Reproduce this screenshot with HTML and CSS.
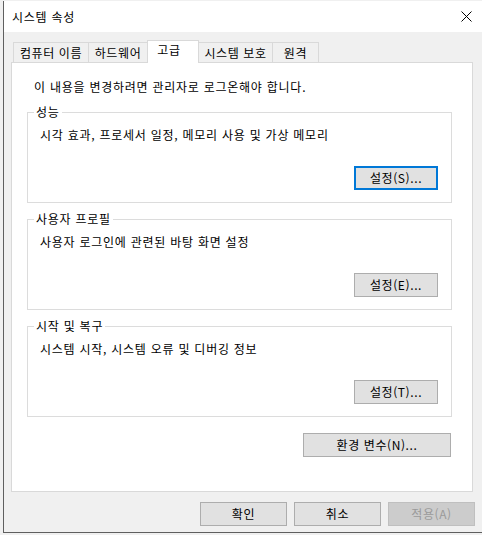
FILE: index.html
```html
<!DOCTYPE html>
<html lang="ko">
<head>
<meta charset="utf-8">
<title>시스템 속성</title>
<link rel="stylesheet" href="styles.css">
</head>
<body>
<div class="window">
  <div class="titlebar">
    <span class="title">시스템 속성</span>
    <span class="close">
      <svg width="11" height="11" viewBox="0 0 11 11"><path d="M0.5 0.5 L10.5 10.5 M10.5 0.5 L0.5 10.5" stroke="#000" stroke-width="1" fill="none"/></svg>
    </span>
  </div>
  <div class="body">
    <div class="tabs">
      <div class="tab t1">컴퓨터 이름</div>
      <div class="tab t2">하드웨어</div>
      <div class="tab t3 active">고급</div>
      <div class="tab t4">시스템 보호</div>
      <div class="tab t5">원격</div>
    </div>
    <div class="panel">
      <p class="info">이 내용을 변경하려면 관리자로 로그온해야 합니다.</p>
      <fieldset class="group first">
        <legend>성능</legend>
        <p class="desc">시각 효과, 프로세서 일정, 메모리 사용 및 가상 메모리</p>
        <div class="row"><button class="btn set focused">설정(S)...</button></div>
      </fieldset>
      <fieldset class="group">
        <legend>사용자 프로필</legend>
        <p class="desc">사용자 로그인에 관련된 바탕 화면 설정</p>
        <div class="row"><button class="btn set">설정(E)...</button></div>
      </fieldset>
      <fieldset class="group">
        <legend>시작 및 복구</legend>
        <p class="desc">시스템 시작, 시스템 오류 및 디버깅 정보</p>
        <div class="row"><button class="btn set">설정(T)...</button></div>
      </fieldset>
      <div class="envrow"><button class="btn env">환경 변수(N)...</button></div>
    </div>
    <div class="footer">
      <button class="btn foot">확인</button>
      <button class="btn foot">취소</button>
      <button class="btn foot disabled">적용(A)</button>
    </div>
  </div>
</div>
</body>
</html>
```

FILE: styles.css
```css
* { box-sizing: border-box; }
html, body {
  margin: 0;
  padding: 0;
  background: #f0f0f0;
}
body {
  font-family: "Noto Sans CJK KR", "Noto Sans", sans-serif;
  font-size: 12px;
  line-height: 16px;
  letter-spacing: 0.75px;
  color: #000;
  padding: 1px 0 0 3px;
}
.window {
  width: 479px;
  height: 532px;
  border-left: 1px solid #5f5f5f;
  border-bottom: 1px solid #5f5f5f;
  background: #f0f0f0;
  display: flex;
  flex-direction: column;
}
.titlebar {
  height: 31px;
  background: #fff;
  display: flex;
  align-items: center;
  justify-content: space-between;
  padding: 0 10px 0 8px;
}
.title { font-size: 12px; }
.close { display: flex; width: 11px; height: 11px; margin-top: -1px; }
.body {
  padding: 8px 7px 0 7px;
  display: flex;
  flex-direction: column;
}
.tabs {
  display: flex;
  align-items: flex-end;
  height: 23px;
  margin-left: 2px;
}
.tab {
  height: 20px;
  margin-bottom: 1px;
  margin-left: -1px;
  border: 1px solid #d9d9d9;
  border-bottom: none;
  background: #f0f0f0;
  text-align: center;
  line-height: 20px;
  white-space: nowrap;
  letter-spacing: 0.6px;
}
.t1 { width: 76px; margin-left: 0; }
.t2 { width: 60px; }
.t3 { width: 52px; }
.t4 { width: 75px; }
.t5 { width: 47px; }
.tab.active {
  height: 23px;
  margin-bottom: 0;
  background: #fff;
  position: relative;
  z-index: 1;
  line-height: 18px;
  padding-right: 8px;
}
.panel {
  margin-top: -1px;
  width: 462px;
  height: 430px;
  border: 1px solid #d9d9d9;
  background: #fff;
  display: flex;
  flex-direction: column;
}
.info {
  margin: 16px 0 0 22px;
}
.group {
  margin: 8px 20px 0 15px;
  padding: 7px 12px 12px 12px;
  border: 1px solid #dcdcdc;
  min-inline-size: 0;
}
.group.first { margin-top: 9px; }
.group legend {
  margin-left: -6px;
  padding: 0 2px;
  line-height: 16px;
}
.desc { margin: 0; }
.row {
  display: flex;
  justify-content: flex-end;
  margin-top: 23px;
  margin-right: 1px;
}
.btn {
  font-family: inherit;
  font-size: 12px;
  line-height: 16px;
  letter-spacing: 0.6px;
  color: #000;
  background: #e1e1e1;
  border: 1px solid #adadad;
  height: 24px;
  padding: 0;
  margin: 0;
  text-align: center;
}
.btn.set { width: 84px; }
.btn.focused { border: 2px solid #0078d7; }
.envrow {
  display: flex;
  justify-content: flex-end;
  margin: 16px 21px 0 0;
}
.btn.env { width: 148px; }
.footer {
  display: flex;
  justify-content: flex-end;
  gap: 7px;
  margin-top: 10px;
}
.btn.foot { width: 87px; }
.btn.disabled {
  background: #cccccc;
  border-color: #bfbfbf;
  color: #9a9a9a;
}
```
